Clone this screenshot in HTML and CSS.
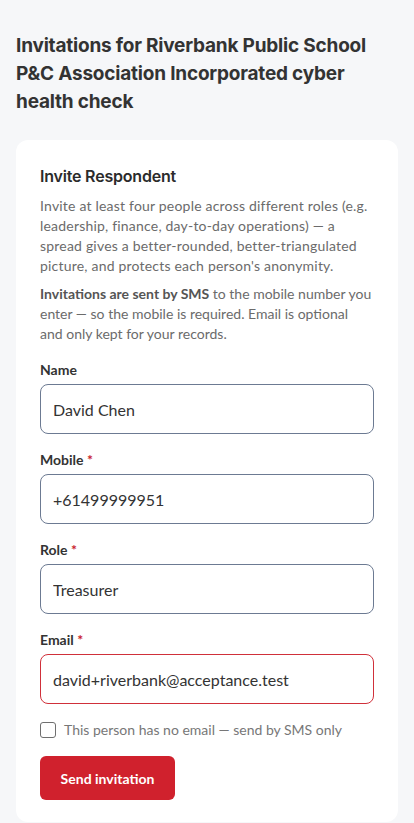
FILE: index.html
```html
<!DOCTYPE html>
<html lang="en">
<head>
<meta charset="utf-8">
<meta name="viewport" content="width=device-width, initial-scale=1">
<title>Invitations</title>
<link rel="stylesheet" href="styles.css">
</head>
<body>
<main class="page">
  <h1 class="title">Invitations for Riverbank Public School P&amp;C Association Incorporated cyber health check</h1>
  <section class="card">
    <h2 class="card-title">Invite Respondent</h2>
    <p class="intro intro-wide">Invite at least four people across different roles (e.g. leadership, finance, day-to-day operations) — a spread gives a better-rounded, better-triangulated picture, and protects each person's anonymity.</p>
    <p class="intro"><strong>Invitations are sent by SMS</strong> to the mobile number you enter — so the mobile is required. Email is optional and only kept for your records.</p>
    <form class="form">
      <div class="field">
        <label class="label" for="name">Name</label>
        <input class="input" id="name" type="text" value="David Chen">
      </div>
      <div class="field">
        <label class="label" for="mobile">Mobile <span class="req">*</span></label>
        <input class="input" id="mobile" type="text" value="+61499999951">
      </div>
      <div class="field">
        <label class="label" for="role">Role <span class="req">*</span></label>
        <input class="input" id="role" type="text" value="Treasurer">
      </div>
      <div class="field">
        <label class="label" for="email">Email <span class="req">*</span></label>
        <input class="input input-error" id="email" type="text" value="david+riverbank@acceptance.test">
      </div>
      <label class="check">
        <span class="box"></span>
        <span class="check-text">This person has no email — send by SMS only</span>
      </label>
      <button class="btn" type="button">Send invitation</button>
    </form>
  </section>
</main>
</body>
</html>
```
FILE: styles.css
```css
* { box-sizing: border-box; }
html, body { margin: 0; padding: 0; }
body {
  background: #f6f7f9;
  font-family: Lato, "Noto Sans", sans-serif;
  color: #333;
}
.page {
  padding: 32px 16px 0;
}
.title {
  margin: 0 0 24px;
  font-family: Inter, "Noto Sans", sans-serif;
  font-size: 19px;
  font-weight: 700;
  line-height: 28px;
  color: #333;
  letter-spacing: -0.2px;
}
.card {
  background: #fff;
  border-radius: 12px;
  padding: 24px 24px 22px;
}
.card-title {
  margin: 0 0 8px;
  font-family: Inter, "Noto Sans", sans-serif;
  font-size: 16px;
  font-weight: 600;
  line-height: 24px;
  color: #2b2b2b;
  letter-spacing: -0.2px;
}
.intro {
  margin: 0 0 8px;
  font-size: 14px;
  line-height: 20px;
  color: #6b6b6b;
}
.intro-wide { letter-spacing: 0.2px; }
.intro strong {
  font-weight: 700;
  color: #555;
}
.form {
  display: flex;
  flex-direction: column;
  gap: 16px;
  margin-top: 16px;
}
.field {
  display: flex;
  flex-direction: column;
  gap: 4px;
}
.label {
  font-size: 14px;
  line-height: 20px;
  font-weight: 700;
  color: #333;
}
.req { color: #c8202b; }
.input {
  height: 50px;
  border: 1px solid #6c7a92;
  border-radius: 8px;
  padding: 0 12px;
  font-family: Lato, "Noto Sans", sans-serif;
  font-size: 16px;
  color: #333;
  background: #fff;
  width: 100%;
  outline: none;
}
.input-error { border-color: #d0303a; }
.check {
  display: flex;
  align-items: center;
  gap: 8px;
  height: 20px;
}
.box {
  width: 16px;
  height: 16px;
  border: 1px solid #6f6f6f;
  border-radius: 3px;
  flex: none;
}
.check-text {
  font-size: 14px;
  line-height: 20px;
  color: #777;
}
.btn {
  align-self: flex-start;
  height: 44px;
  width: 135px;
  background: #d0212d;
  color: #fff;
  border: none;
  border-radius: 6px;
  font-family: Lato, "Noto Sans", sans-serif;
  font-size: 14px;
  font-weight: 700;
  padding: 0;
}
```
